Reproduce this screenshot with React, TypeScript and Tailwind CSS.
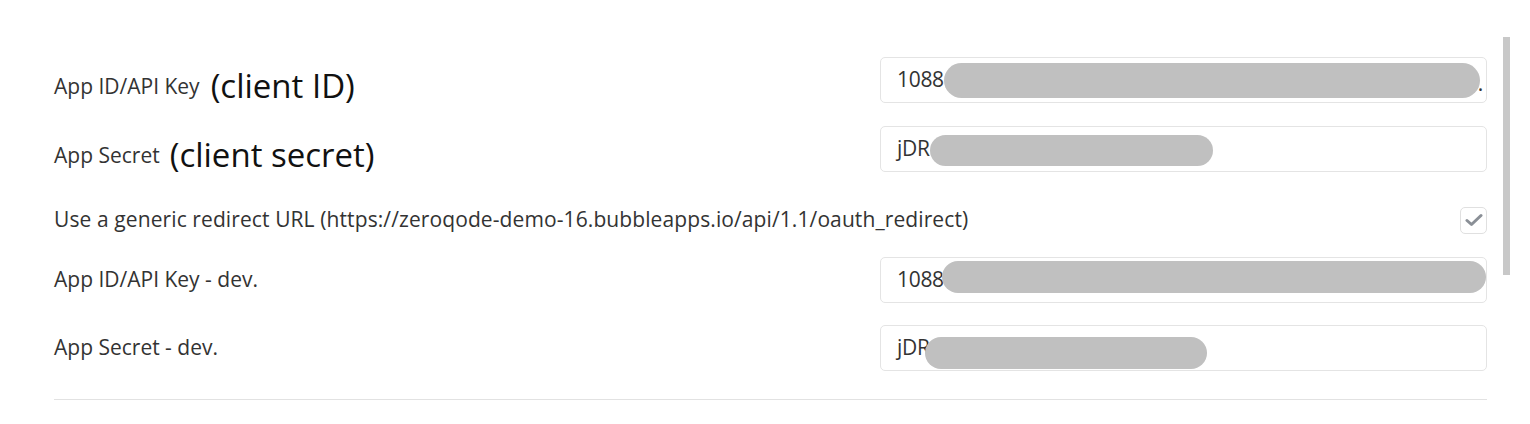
import React from "react";

const font = { fontFamily: '"Open Sans", "Noto Sans", sans-serif' };

function Blob({ className }: { className: string }) {
  return <div className={`absolute rounded-full bg-[#c0c0c0] ${className}`} />;
}

function Field({ prefix, blob, tail }: { prefix: string; blob: string; tail?: string }) {
  return (
    <div className="relative h-[46px] w-[607px] rounded-[5px] border border-[#e4e4e4] bg-white flex items-center pl-[16px] text-[21px] tracking-[-0.3px] text-[#333]">
      <span>{prefix}</span>
      {tail && <span className="absolute right-[3px] top-[10px] text-[21px] text-[#333]">{tail}</span>}
      <Blob className={blob} />
    </div>
  );
}

export default function App() {
  return (
    <div className="w-[1530px] h-[424px] bg-white relative overflow-hidden" style={font}>
      <div className="absolute left-[1503px] top-[37px] w-[7px] h-[238px] bg-[#c8c8c8]" />
      <div className="pl-[54px] pr-[43px] pt-[57px] text-[#333]">
        <div className="flex items-center justify-between h-[46px]">
          <div className="flex items-baseline pt-[8px]">
            <span className="text-[21px]">App ID/API Key</span>
            <span className="text-[33px] leading-none text-[#111] ml-[11px] translate-y-[4px]">(client ID)</span>
          </div>
          <Field prefix="1088" blob="left-[63px] top-[5px] w-[536px] h-[35px]" tail="." />
        </div>
        <div className="flex items-center justify-between h-[46px] mt-[23px]">
          <div className="flex items-baseline pt-[8px]">
            <span className="text-[21px]">App Secret</span>
            <span className="text-[33px] leading-none text-[#111] ml-[10px] translate-y-[4px]">(client secret)</span>
          </div>
          <Field prefix="jDR" blob="left-[49px] top-[8px] w-[283px] h-[31px]" />
        </div>
        <div className="flex items-center justify-between h-[28px] mt-[34px]">
          <span className="text-[21px] tracking-[0.1px]">
            Use a generic redirect URL (https://zeroqode-demo-16.bubbleapps.io/api/1.1/oauth_redirect)
          </span>
          <div className="w-[27px] h-[27px] rounded-[5px] border border-[#e0e0e0] flex items-center justify-center">
            <svg width="18" height="14" viewBox="0 0 18 14">
              <path d="M2 7.5 L6.5 11.5 L16 2.5" stroke="#8a8f96" strokeWidth="3" fill="none" strokeLinecap="round" strokeLinejoin="round" />
            </svg>
          </div>
        </div>
        <div className="flex items-center justify-between h-[45px] mt-[23px]">
          <span className="text-[21px]">App ID/API Key - dev.</span>
          <Field prefix="1088" blob="left-[61px] top-[3px] w-[544px] h-[32px]" />
        </div>
        <div className="flex items-center justify-between h-[46px] mt-[23px]">
          <span className="text-[21px]">App Secret - dev.</span>
          <Field prefix="jDR" blob="left-[44px] top-[11px] w-[282px] h-[32px]" />
        </div>
        <div className="mt-[28px] h-px bg-[#e2e2e2]" />
      </div>
    </div>
  );
}
